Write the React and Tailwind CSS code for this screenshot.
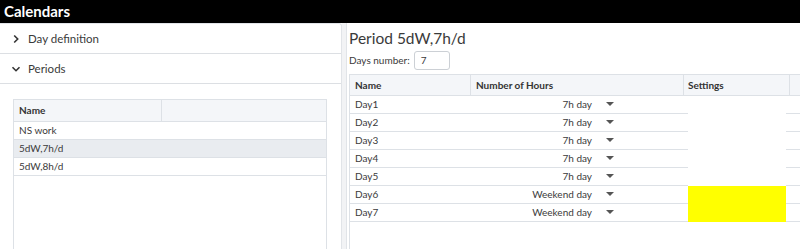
const font = { fontFamily: 'Lato, "Noto Sans", sans-serif' };

const periods = ['NS work', '5dW,7h/d', '5dW,8h/d'];

const days = [
    { name: 'Day1', hours: '7h day', color: null },
    { name: 'Day2', hours: '7h day', color: null },
    { name: 'Day3', hours: '7h day', color: null },
    { name: 'Day4', hours: '7h day', color: null },
    { name: 'Day5', hours: '7h day', color: null },
    { name: 'Day6', hours: 'Weekend day', color: 'yellow' },
    { name: 'Day7', hours: 'Weekend day', color: 'yellow' },
];

const Chevron = ({ down }) => (
    <svg width="10" height="10" viewBox="0 0 10 10" className="text-[#333]">
        {down ? (
            <path d="M1.5 3.2 L5 6.7 L8.5 3.2" fill="none" stroke="currentColor" strokeWidth="1.6" />
        ) : (
            <path d="M3.2 1.5 L6.7 5 L3.2 8.5" fill="none" stroke="currentColor" strokeWidth="1.6" />
        )}
    </svg>
);

const Caret = () => (
    <svg width="8" height="5" viewBox="0 0 8 5" className="text-[#555]">
        <path d="M0 0 L8 0 L4 4 Z" fill="currentColor" />
    </svg>
);

export default function App() {
    return (
        <div className="flex h-[249px] w-[800px] flex-col overflow-hidden bg-white" style={font}>
            <div className="flex h-[23px] shrink-0 items-center bg-black pl-[4px] text-[15px] font-bold text-white">
                Calendars
            </div>

            <div className="flex min-h-0 flex-1">
                {/* left panel */}
                <div className="flex w-[342px] shrink-0 flex-col rounded-tr-[3px] border-r border-t border-[#e1e4e8]">
                    <div className="flex h-[30px] items-center gap-[7px] border-b border-[#dcdfe3] pl-[11px] text-[11.5px] text-[#3a3a3a]">
                        <Chevron />
                        Day definition
                    </div>
                    <div className="flex h-[30px] items-center gap-[7px] border-b border-[#dcdfe3] pl-[11px] text-[11.5px] text-[#3a3a3a]">
                        <Chevron down />
                        Periods
                    </div>
                    <div className="flex-1 px-[13px] pt-[15px]">
                        <div className="h-full w-[314px] border border-b-0 border-[#dde1e6]">
                            <div className="flex h-[22px] border-b border-[#dde1e6] bg-[#f4f6f9] text-[10px] font-bold text-[#333]">
                                <div className="flex w-[148px] items-center border-r border-[#dde1e6] pl-[5px]">Name</div>
                                <div className="flex-1" />
                            </div>
                            {periods.map((p) => (
                                <div
                                    key={p}
                                    className={`flex h-[18px] items-center border-b border-[#dde1e6] pl-[5px] text-[10px] text-[#3a3a3a] ${p === '5dW,7h/d' ? 'bg-[#e9ecf0]' : ''}`}
                                >
                                    {p}
                                </div>
                            ))}
                        </div>
                    </div>
                </div>

                <div className="w-[4px] shrink-0 bg-[#f2f3f5]" />

                {/* right panel */}
                <div className="flex min-w-0 flex-1 flex-col border-l border-[#e1e4e8] pl-[2px]">
                    <div className="pt-[5px] text-[15.5px] leading-[20px] text-[#3a3a3a]">Period 5dW,7h/d</div>
                    <div className="mt-[3px] flex items-center gap-[4px] text-[10px] text-[#3a3a3a]">
                        Days number:
                        <div className="flex h-[19px] w-[36px] items-center rounded-[3px] border border-[#ccd0d5] pl-[6px] text-[10px]">
                            7
                        </div>
                    </div>
                    <div className="mt-[4px] flex-1 border-l border-[#dde1e6]">
                        <div className="flex h-[22px] border-b border-t border-[#dde1e6] bg-[#f4f6f9] text-[10px] font-bold text-[#333]">
                            <div className="flex w-[121px] items-center border-r border-[#dde1e6] pl-[5px]">Name</div>
                            <div className="flex w-[213px] items-center border-r border-[#dde1e6] pl-[5px]">Number of Hours</div>
                            <div className="flex w-[106px] items-center border-r border-[#dde1e6] pl-[4px]">Settings</div>
                            <div className="flex-1" />
                        </div>
                        {days.map((d) => (
                            <div key={d.name} className="flex h-[18px] text-[10px] text-[#3a3a3a]">
                                <div className="flex w-[121px] items-center border-b border-[#dde1e6] pl-[5px]">{d.name}</div>
                                <div className="flex w-[217px] items-center border-b border-[#dde1e6]">
                                    <span className="w-[121px] text-right">{d.hours}</span>
                                    <span className="ml-[14px]">
                                        <Caret />
                                    </span>
                                </div>
                                <div className={`w-[98px] ${d.color === 'yellow' ? 'bg-[#ffff00]' : ''}`} />
                                <div className="flex-1 border-b border-[#dde1e6]" />
                            </div>
                        ))}
                    </div>
                </div>
            </div>
        </div>
    );
}
